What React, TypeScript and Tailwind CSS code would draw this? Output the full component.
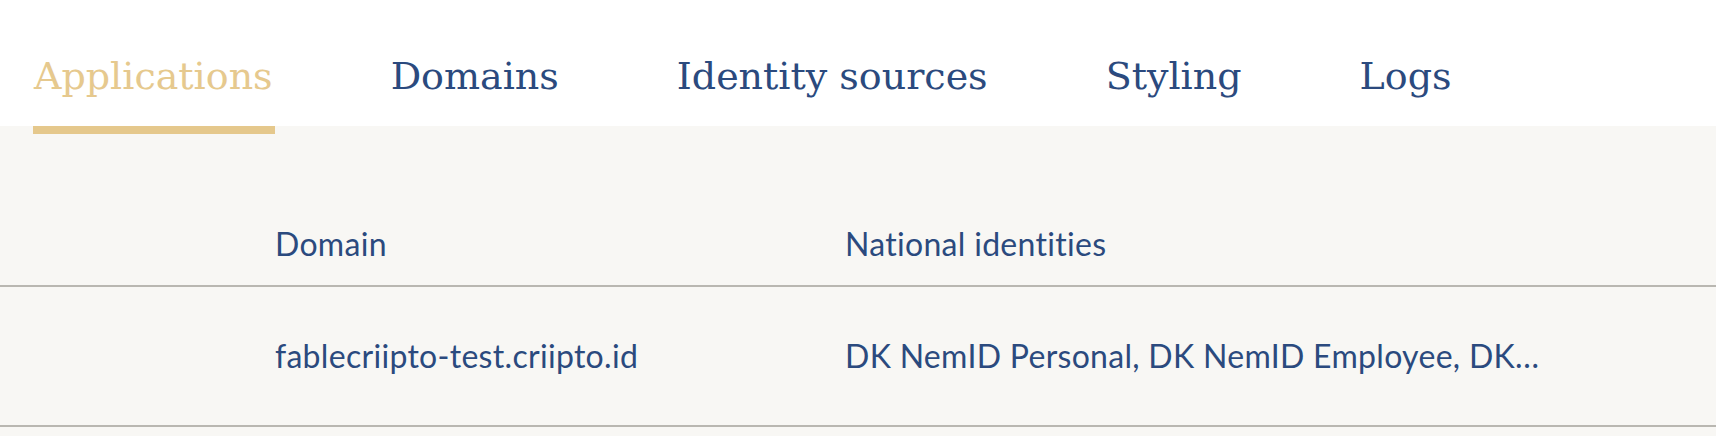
import React from 'react';

const tabs = ['Applications', 'Domains', 'Identity sources', 'Styling', 'Logs'];

const slab = { fontFamily: '"DejaVu Serif", serif' };
const sans = { fontFamily: 'Lato, "Open Sans", sans-serif' };

export default function App() {
  const active = 'Applications';

  return (
    <div className="min-h-[436px] w-full bg-[#f8f7f4]">
      {/* Tab navigation */}
      <nav className="relative flex h-[126px] items-start gap-[118px] bg-white pl-[34px]">
        {tabs.map((tab) => (
          <button
            key={tab}
            className={`relative h-[126px] pt-[25px] text-[38px] leading-none ${
              tab === active ? 'text-[#e6c98e]' : 'text-[#2b4a7e]'
            }`}
            style={slab}
          >
            {tab}
            {tab === active && (
              <span className="absolute -bottom-[8px] -left-[1px] -right-[2px] h-[8px] bg-[#e5c88c]" />
            )}
          </button>
        ))}
      </nav>

      {/* Applications table */}
      <div className="pt-[96px] text-[32px] tracking-[0.3px] text-[#2b4a7e]" style={sans}>
        <div className="grid h-[65px] grid-cols-[275px_570px_1fr] items-start border-b-2 border-[#b9b7b1]">
          <div />
          <div className="leading-[44px]">Domain</div>
          <div className="leading-[44px]">National identities</div>
        </div>
        <div className="grid h-[140px] grid-cols-[275px_570px_1fr] items-center border-b-2 border-[#b9b7b1]">
          <div />
          <div className="whitespace-nowrap">fablecriipto-test.criipto.id</div>
          <div className="whitespace-nowrap">DK NemID Personal, DK NemID Employee, DK…</div>
        </div>
      </div>
    </div>
  );
}
